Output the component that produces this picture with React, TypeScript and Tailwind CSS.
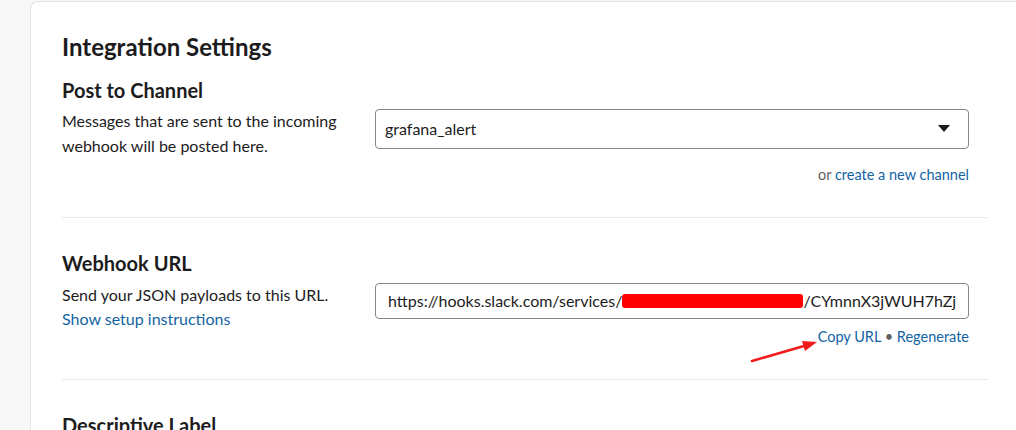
export default function App() {
  const lato = { fontFamily: "Lato, 'Noto Sans', sans-serif" };
  return (
    <div className="min-h-[430px] w-[1016px] overflow-hidden bg-[#f8f8f8] pl-[30px] text-[#1d1c1d]" style={lato}>
      <div className="mt-px min-h-[440px] rounded-tl-[8px] border-l border-t border-[#e4e4e4] bg-white pl-[31px] pr-[28px] pt-[29px]">
        <h1 className="text-[24px] font-bold leading-[32px]">Integration Settings</h1>

        {/* Post to Channel */}
        <section className="pb-[32px]">
          <h2 className="mt-[13px] text-[20px] font-bold leading-[28px]">Post to Channel</h2>
          <div className="mt-[4px] flex">
            <p className="w-[313px] shrink-0 pr-[20px] text-[16px] leading-[25px]">
              Messages that are sent to the incoming webhook will be posted here.
            </p>
            <div className="mt-px flex w-[594px] flex-col">
              <div className="flex h-[40px] items-center justify-between rounded-[4px] border border-[#868686] pl-[9px] pr-[18px] text-[16px]">
                <span>grafana_alert</span>
                <svg width="12" height="8" viewBox="0 0 12 8"><path d="M0 0h12L6 7z" fill="#1d1c1d" /></svg>
              </div>
              <p className="mt-[16px] text-right text-[14.5px] leading-[20px] text-[#616061]">
                or <span className="text-[#1264a3]">create a new channel</span>
              </p>
            </div>
          </div>
        </section>

        <div className="h-px w-[926px] bg-[#e8e8e8]" />

        {/* Webhook URL */}
        <section className="relative pb-[32px] pt-[31px]">
          <h2 className="text-[20px] font-bold leading-[28px]">Webhook URL</h2>
          <div className="mt-[6px] flex">
            <div className="w-[313px] shrink-0 pr-[20px] text-[16px] leading-[24px]">
              <p>Send your JSON payloads to this URL.</p>
              <p className="text-[#1264a3]">Show setup instructions</p>
            </div>
            <div className="flex w-[594px] flex-col">
              <div className="flex h-[36px] items-center overflow-hidden whitespace-nowrap rounded-[4px] border border-[#868686] pl-[12px] text-[16px]">
                <span>https://hooks.slack.com/services/</span>
                <span className="inline-block h-[14px] w-[181px] rounded-[3px] bg-[#ff0000]" />
                <span>/CYmnnX3jWUH7hZj</span>
              </div>
              <p className="mt-[8px] text-right text-[14.5px] leading-[20px] text-[#1264a3]">
                Copy URL <span className="text-[#616061]">•</span> Regenerate
              </p>
            </div>
          </div>
          <svg className="absolute left-[688px] top-[118px]" width="70" height="30" viewBox="0 0 70 30">
            <path d="M2 25 L54 10" stroke="#f21a1a" strokeWidth="2.5" strokeLinecap="round" />
            <path d="M67 6 L52 5 L55 15 z" fill="#f21a1a" />
          </svg>
        </section>

        <div className="h-px w-[926px] bg-[#e8e8e8]" />

        <h2 className="mt-[31px] text-[20px] font-bold leading-[28px]">Descriptive Label</h2>
      </div>
    </div>
  );
}
